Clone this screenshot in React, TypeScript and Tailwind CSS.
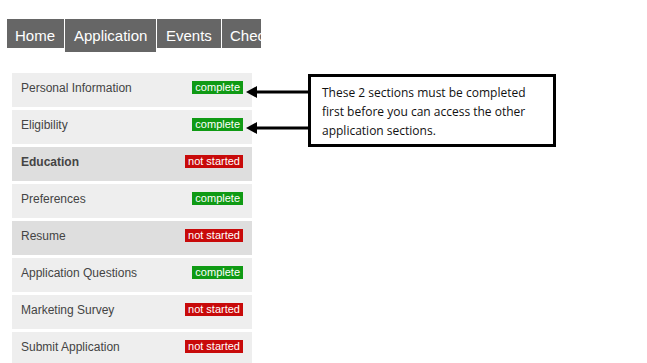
type Section = {
  name: string;
  done: boolean;
  current?: boolean;
  shaded?: boolean;
};

const sections: Section[] = [
  { name: "Personal Information", done: true },
  { name: "Eligibility", done: true },
  { name: "Education", done: false, current: true, shaded: true },
  { name: "Preferences", done: true },
  { name: "Resume", done: false, shaded: true },
  { name: "Application Questions", done: true },
  { name: "Marketing Survey", done: false },
  { name: "Submit Application", done: false },
];

const tabClasses =
  "flex h-[29px] shrink-0 items-start bg-[#666666] pt-[6px] text-[15px] text-white";

function Arrow({ top }: { top: number }) {
  return (
    <svg
      className="absolute left-[-62px]"
      style={{ top }}
      width="64"
      height="14"
      viewBox="0 0 64 14"
    >
      <line x1="8" y1="7" x2="64" y2="7" stroke="#000" strokeWidth="3" />
      <polygon points="0,7 11,1 11,13" fill="#000" />
    </svg>
  );
}

export default function App() {
  return (
    <div className="h-[363px] w-[647px] overflow-hidden bg-white font-['Liberation_Sans',Arial,sans-serif]">
      <div className="flex w-[261px] items-start gap-px overflow-hidden pl-[7px] pt-[19px]">
        <div className={`${tabClasses} w-[57px] pl-[8px]`}>Home</div>
        <div className={`${tabClasses} h-[33px] w-[91px] bg-[#5c5e62] pl-[9px]`}>
          Application
        </div>
        <div className={`${tabClasses} w-[64px] pl-[9px]`}>Events</div>
        <div className={`${tabClasses} w-[60px] pl-[8px]`}>Checklist</div>
      </div>

      <div className="flex items-start pl-[12px] pt-[21px]">
        <div className="flex w-[240px] flex-col gap-[3px]">
          {sections.map(s => (
            <div
              key={s.name}
              className={`flex h-[34px] items-center justify-between pb-[5px] pl-[9px] pr-[9px] text-[12px] text-[#444444] ${
                s.shaded ? "bg-[#dedede]" : "bg-[#eeeeee]"
              } ${s.current ? "font-bold text-[#333333]" : ""}`}
            >
              <span>{s.name}</span>
              <span
                className={`px-[3px] text-[11px] leading-[13px] font-normal text-white ${
                  s.done ? "bg-[#0f9a14]" : "bg-[#c80a0a]"
                }`}
              >
                {s.done ? "complete" : "not started"}
              </span>
            </div>
          ))}
        </div>

        <div className="relative ml-[56px] mt-[1px]">
          <Arrow top={11} />
          <Arrow top={47} />
          <div className="w-[248px] border-[3px] border-black bg-white px-[11px] pb-[4px] pt-[6px] font-['Open_Sans','Noto_Sans',sans-serif] text-[12px] leading-[19px] text-[#111111]">
            These 2 sections must be completed first before you can access the other application sections.
          </div>
        </div>
      </div>
    </div>
  );
}
